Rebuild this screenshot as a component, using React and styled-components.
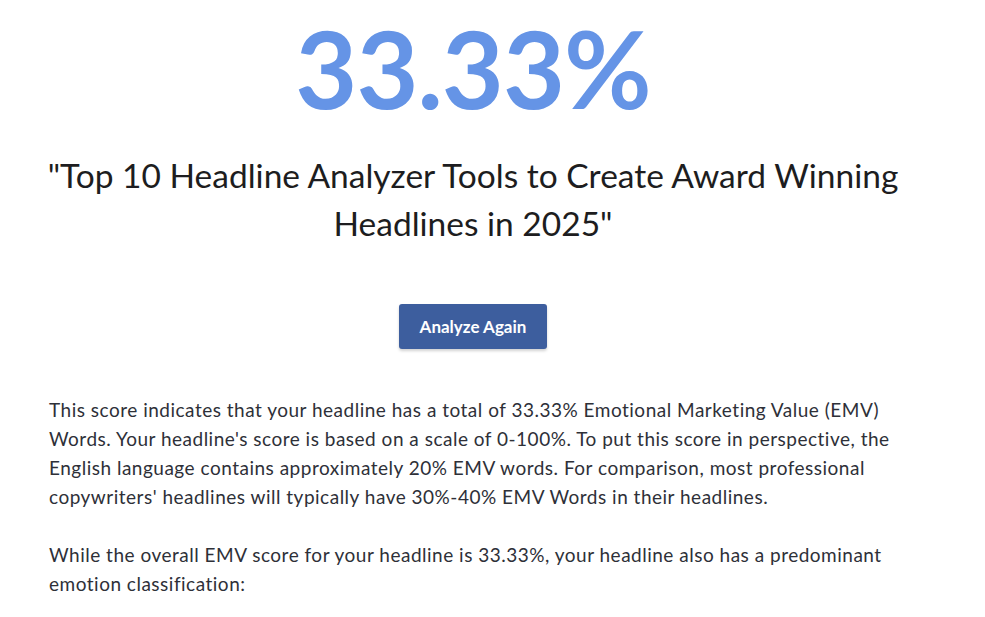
import React from "react";
import styled, { createGlobalStyle } from "styled-components";

const Global = createGlobalStyle`
  html, body { margin: 0; padding: 0; background: #fff; }
  body { font-family: "Lato", "Noto Sans", sans-serif; color: #2b2d33; }
`;

const Page = styled.main`
  width: 860px;
  margin-left: 43px;
  display: flex;
  flex-direction: column;
  align-items: center;
`;

const Score = styled.div`
  font-size: 107px;
  font-weight: 700;
  line-height: 1;
  color: #6594e6;
  margin-top: 14px;
  letter-spacing: -1px;
`;

const Headline = styled.h1`
  margin: 30px 0 0;
  font-size: 33.5px;
  font-weight: 400;
  line-height: 48px;
  color: #1d1d20;
  text-align: center;
`;

const Button = styled.button`
  margin-top: 57px;
  width: 148px;
  height: 45px;
  border: none;
  border-radius: 3px;
  background: #3d5e9e;
  color: #fff;
  font-family: inherit;
  font-size: 17px;
  font-weight: 700;
  box-shadow: 0 2px 3px rgba(0, 0, 0, 0.18);
  cursor: pointer;
`;

const Body = styled.div`
  align-self: stretch;
  margin: 46px 0 0 6px;
`;

const Para = styled.p`
  margin: 0 0 29px;
  font-size: 19px;
  letter-spacing: 0.5px;
  line-height: 29px;
  color: #2e3038;
`;

export default function App() {
  return (
    <>
      <Global />
      <Page>
        <Score>33.33%</Score>
        <Headline>
          "Top 10 Headline Analyzer Tools to Create Award Winning Headlines in 2025"
        </Headline>
        <Button>Analyze Again</Button>
        <Body>
          <Para>
            This score indicates that your headline has a total of 33.33% Emotional Marketing
            Value (EMV) Words. Your headline's score is based on a scale of 0-100%. To put this
            score in perspective, the English language contains approximately 20% EMV words. For
            comparison, most professional copywriters' headlines will typically have 30%-40% EMV
            Words in their headlines.
          </Para>
          <Para>
            While the overall EMV score for your headline is 33.33%, your headline also has a
            predominant emotion classification:
          </Para>
        </Body>
      </Page>
    </>
  );
}
